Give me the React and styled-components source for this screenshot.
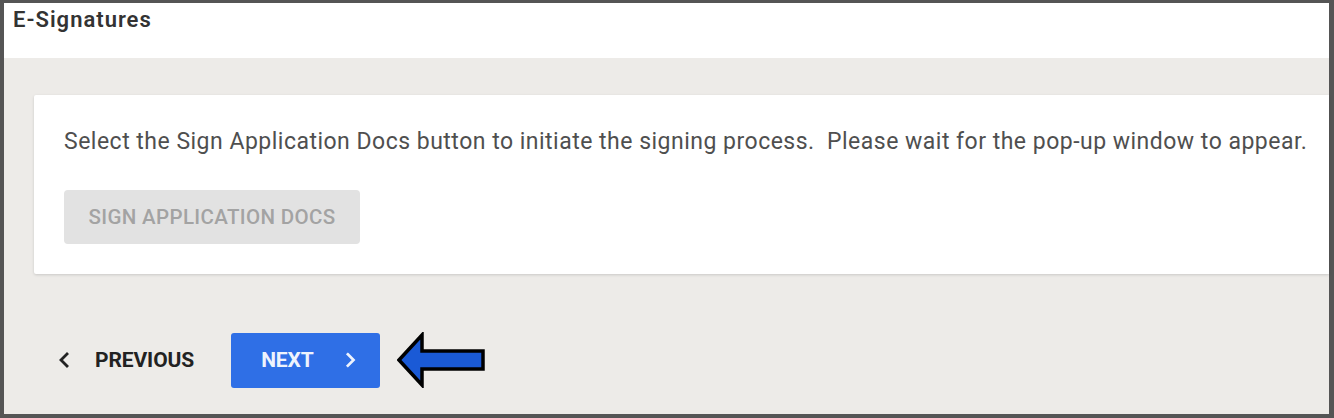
import React from 'react';
import styled, { createGlobalStyle } from 'styled-components';

const GlobalStyle = createGlobalStyle`
	html, body {
		margin: 0;
		padding: 0;
		background: #555555;
	}
	body {
		font-family: Roboto, "Liberation Sans", Arial, sans-serif;
	}
`;

const Frame = styled.div`
	width: 1334px;
	height: 418px;
	box-sizing: border-box;
	padding: 3px 5px 4px 4px;
	background: #555555;
	display: flex;
	flex-direction: column;
`;

const Header = styled.div`
	height: 55px;
	background: #ffffff;
	padding: 4px 0 0 9px;
	box-sizing: border-box;
	font-size: 22px;
	font-weight: 600;
	color: #333333;
	letter-spacing: 1px;
`;

const Body = styled.div`
	flex: 1;
	background: #edebe8;
	padding: 37px 0 0 30px;
	display: flex;
	flex-direction: column;
`;

const Card = styled.div`
	background: #ffffff;
	height: 179px;
	box-sizing: border-box;
	padding: 29px 0 0 30px;
	box-shadow: 0 1px 3px rgba(0, 0, 0, 0.15);
	border-radius: 2px 0 0 2px;
`;

const Message = styled.p`
	margin: 0;
	font-size: 23px;
	line-height: 36px;
	color: #4f4f4f;
	letter-spacing: 0.49px;
	white-space: nowrap;
`;

const DisabledButton = styled.button`
	margin-top: 30px;
	width: 296px;
	height: 54px;
	border: none;
	border-radius: 4px;
	background: #e2e2e2;
	color: #a3a3a3;
	font-family: inherit;
	font-size: 20.5px;
	font-weight: 500;
	text-transform: uppercase;
	letter-spacing: 0.35px;
	cursor: default;
`;

const Nav = styled.div`
	display: flex;
	align-items: center;
	margin-top: 58px;
	margin-left: 24px;
`;

const NavButton = styled.button`
	display: flex;
	align-items: center;
	height: 55px;
	border: none;
	border-radius: 3px;
	font-family: inherit;
	font-size: 21px;
	font-weight: 700;
	text-transform: uppercase;
	letter-spacing: -0.1px;
	cursor: pointer;
	background: ${p => (p.$primary ? '#2f6fe6' : 'transparent')};
	color: ${p => (p.$primary ? '#eef3fd' : '#222222')};
	padding: ${p => (p.$primary ? '0 24px 0 30px' : '0 37px 0 0')};
	gap: ${p => (p.$primary ? '31px' : '25px')};
	width: ${p => (p.$primary ? '149px' : 'auto')};
	box-sizing: border-box;
`;

const Chevron = ({ dir }) => (
	<svg width="12" height="16" viewBox="0 0 12 16" fill="none">
		<path
			d={dir === 'left' ? 'M9 2 L3 8 L9 14' : 'M3 2 L9 8 L3 14'}
			stroke="currentColor"
			strokeWidth="2.8"
			strokeLinecap="square"
		/>
	</svg>
);

const Pointer = styled.svg`
	margin-left: 17px;
	display: block;
`;

const Arrow = () => (
	<Pointer width="90" height="56" viewBox="0 0 90 56">
		<path
			d="M2 28 L25 3 L25 19 L86 19 L86 37 L25 37 L25 53 Z"
			fill="#1a5ad6"
			stroke="#000000"
			strokeWidth="3.5"
			strokeLinejoin="miter"
		/>
	</Pointer>
);

export default function App() {
	return (
		<>
			<GlobalStyle />
			<Frame>
				<Header>E-Signatures</Header>
				<Body>
					<Card>
						<Message>
							Select the Sign Application Docs button to initiate the signing process.&nbsp; Please wait for the pop-up window to appear.
						</Message>
						<DisabledButton disabled>Sign Application Docs</DisabledButton>
					</Card>
					<Nav>
						<NavButton>
							<Chevron dir="left" />
							Previous
						</NavButton>
						<NavButton $primary>
							Next
							<Chevron dir="right" />
						</NavButton>
						<Arrow />
					</Nav>
				</Body>
			</Frame>
		</>
	);
}
